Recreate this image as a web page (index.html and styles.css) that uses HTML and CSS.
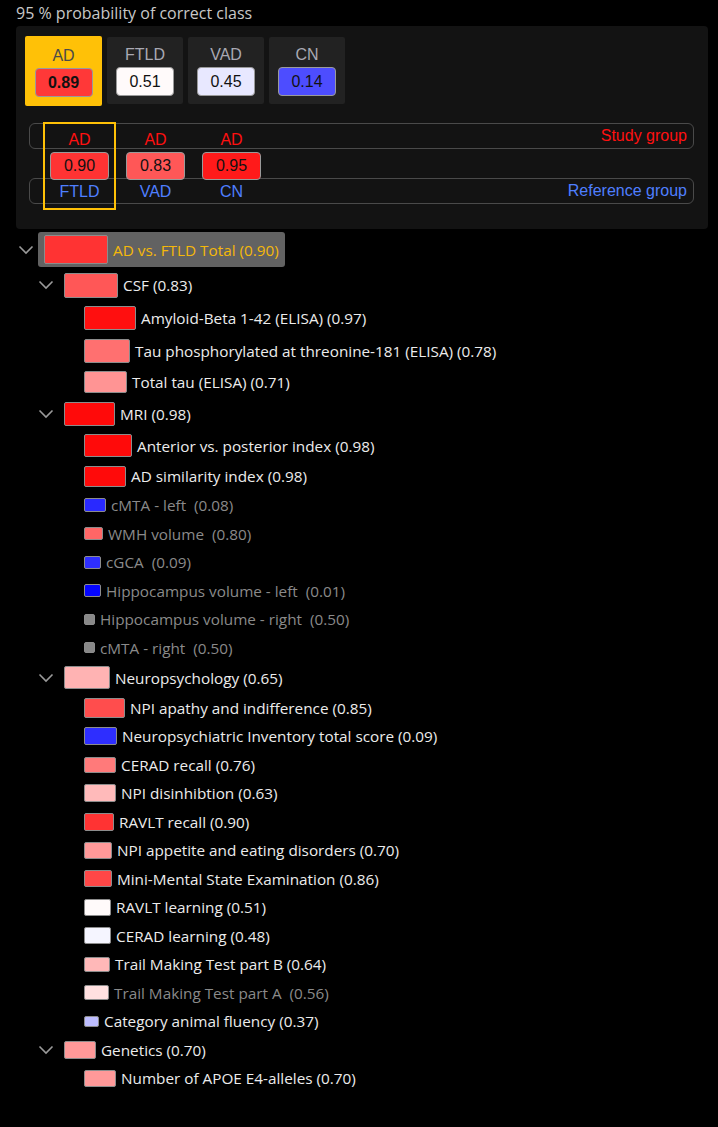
FILE: index.html
```html
<!DOCTYPE html>
<html lang="en">
<head>
    <meta charset="UTF-8">
    <meta name="viewport" content="width=device-width, initial-scale=1.0">
    <title>Classification</title>
    <link rel="stylesheet" href="styles.css">
</head>
<body>
    <div class="title">95 % probability of correct class</div>

    <div class="panel">
        <div class="classes">
            <div class="class-tab selected">
                <span class="class-name">AD</span>
                <span class="score" style="background:#ff3838">0.89</span>
            </div>
            <div class="class-tab">
                <span class="class-name">FTLD</span>
                <span class="score" style="background:#fffafa">0.51</span>
            </div>
            <div class="class-tab">
                <span class="class-name">VAD</span>
                <span class="score" style="background:#e8e8ff">0.45</span>
            </div>
            <div class="class-tab">
                <span class="class-name">CN</span>
                <span class="score" style="background:#4d4dff">0.14</span>
            </div>
        </div>

        <div class="compare">
            <div class="group-bars">
                <div class="group-bar study">Study group</div>
                <div class="group-bar reference">Reference group</div>
            </div>
            <div class="pairs">
                <div class="pair active">
                    <span class="pair-study">AD</span>
                    <span class="score" style="background:#ff3333">0.90</span>
                    <span class="pair-ref">FTLD</span>
                </div>
                <div class="pair">
                    <span class="pair-study">AD</span>
                    <span class="score" style="background:#ff5757">0.83</span>
                    <span class="pair-ref">VAD</span>
                </div>
                <div class="pair">
                    <span class="pair-study">AD</span>
                    <span class="score" style="background:#ff1a1a">0.95</span>
                    <span class="pair-ref">CN</span>
                </div>
            </div>
        </div>
    </div>

    <ul class="tree">
        <li>
            <div class="node root">
                <span class="toggle"><svg viewBox="0 0 16 16"><polyline points="1.5,4.5 8,11 14.5,4.5"/></svg></span>
                <span class="node-content selected">
                    <span class="swatch" style="width:64px;height:29px;background:#ff3333"></span>
                    <span class="node-label">AD vs. FTLD Total (0.90)</span>
                </span>
            </div>
            <ul>
                <li>
                    <div class="node">
                        <span class="toggle"><svg viewBox="0 0 16 16"><polyline points="1.5,4.5 8,11 14.5,4.5"/></svg></span>
                        <span class="node-content">
                            <span class="swatch" style="width:54px;height:25px;background:#ff5757"></span>
                            <span class="node-label">CSF (0.83)</span>
                        </span>
                    </div>
                    <ul>
                        <li><div class="node"><span class="toggle"></span><span class="node-content"><span class="swatch" style="width:52px;height:24px;background:#ff0f0f"></span><span class="node-label">Amyloid-Beta 1-42 (ELISA) (0.97)</span></span></div></li>
                        <li><div class="node"><span class="toggle"></span><span class="node-content"><span class="swatch" style="width:46px;height:24px;background:#ff7070"></span><span class="node-label">Tau phosphorylated at threonine-181 (ELISA) (0.78)</span></span></div></li>
                        <li><div class="node"><span class="toggle"></span><span class="node-content"><span class="swatch" style="width:43px;height:22px;background:#ff9494"></span><span class="node-label">Total tau (ELISA) (0.71)</span></span></div></li>
                    </ul>
                </li>
                <li>
                    <div class="node">
                        <span class="toggle"><svg viewBox="0 0 16 16"><polyline points="1.5,4.5 8,11 14.5,4.5"/></svg></span>
                        <span class="node-content">
                            <span class="swatch" style="width:51px;height:24px;background:#ff0a0a"></span>
                            <span class="node-label">MRI (0.98)</span>
                        </span>
                    </div>
                    <ul>
                        <li><div class="node"><span class="toggle"></span><span class="node-content"><span class="swatch" style="width:48px;height:23px;background:#ff0a0a"></span><span class="node-label">Anterior vs. posterior index (0.98)</span></span></div></li>
                        <li><div class="node"><span class="toggle"></span><span class="node-content"><span class="swatch" style="width:42px;height:21px;background:#ff0a0a"></span><span class="node-label">AD similarity index (0.98)</span></span></div></li>
                        <li><div class="node missing"><span class="toggle"></span><span class="node-content"><span class="swatch" style="width:22px;height:14px;background:#2929ff"></span><span class="node-label">cMTA - left&nbsp; (0.08)</span></span></div></li>
                        <li><div class="node missing"><span class="toggle"></span><span class="node-content"><span class="swatch" style="width:19px;height:13px;background:#ff6666"></span><span class="node-label">WMH volume&nbsp; (0.80)</span></span></div></li>
                        <li><div class="node missing"><span class="toggle"></span><span class="node-content"><span class="swatch" style="width:17px;height:13px;background:#2e2eff"></span><span class="node-label">cGCA&nbsp; (0.09)</span></span></div></li>
                        <li><div class="node missing"><span class="toggle"></span><span class="node-content"><span class="swatch" style="width:17px;height:13px;background:#0505ff"></span><span class="node-label">Hippocampus volume - left&nbsp; (0.01)</span></span></div></li>
                        <li><div class="node missing"><span class="toggle"></span><span class="node-content"><span class="swatch" style="width:11px;height:11px;background:#888888"></span><span class="node-label">Hippocampus volume - right&nbsp; (0.50)</span></span></div></li>
                        <li><div class="node missing"><span class="toggle"></span><span class="node-content"><span class="swatch" style="width:11px;height:11px;background:#888888"></span><span class="node-label">cMTA - right&nbsp; (0.50)</span></span></div></li>
                    </ul>
                </li>
                <li>
                    <div class="node">
                        <span class="toggle"><svg viewBox="0 0 16 16"><polyline points="1.5,4.5 8,11 14.5,4.5"/></svg></span>
                        <span class="node-content">
                            <span class="swatch" style="width:46px;height:23px;background:#ffb3b3"></span>
                            <span class="node-label">Neuropsychology (0.65)</span>
                        </span>
                    </div>
                    <ul>
                        <li><div class="node"><span class="toggle"></span><span class="node-content"><span class="swatch" style="width:41px;height:20px;background:#ff4d4d"></span><span class="node-label">NPI apathy and indifference (0.85)</span></span></div></li>
                        <li><div class="node"><span class="toggle"></span><span class="node-content"><span class="swatch" style="width:33px;height:18px;background:#2e2eff"></span><span class="node-label">Neuropsychiatric Inventory total score (0.09)</span></span></div></li>
                        <li><div class="node"><span class="toggle"></span><span class="node-content"><span class="swatch" style="width:32px;height:16px;background:#ff7a7a"></span><span class="node-label">CERAD recall (0.76)</span></span></div></li>
                        <li><div class="node"><span class="toggle"></span><span class="node-content"><span class="swatch" style="width:32px;height:18px;background:#ffbaba"></span><span class="node-label">NPI disinhibtion (0.63)</span></span></div></li>
                        <li><div class="node"><span class="toggle"></span><span class="node-content"><span class="swatch" style="width:30px;height:18px;background:#ff3333"></span><span class="node-label">RAVLT recall (0.90)</span></span></div></li>
                        <li><div class="node"><span class="toggle"></span><span class="node-content"><span class="swatch" style="width:28px;height:17px;background:#ff9999"></span><span class="node-label">NPI appetite and eating disorders (0.70)</span></span></div></li>
                        <li><div class="node"><span class="toggle"></span><span class="node-content"><span class="swatch" style="width:28px;height:17px;background:#ff4747"></span><span class="node-label">Mini-Mental State Examination (0.86)</span></span></div></li>
                        <li><div class="node"><span class="toggle"></span><span class="node-content"><span class="swatch" style="width:27px;height:17px;background:#fffafa"></span><span class="node-label">RAVLT learning (0.51)</span></span></div></li>
                        <li><div class="node"><span class="toggle"></span><span class="node-content"><span class="swatch" style="width:27px;height:17px;background:#f5f5ff"></span><span class="node-label">CERAD learning (0.48)</span></span></div></li>
                        <li><div class="node"><span class="toggle"></span><span class="node-content"><span class="swatch" style="width:26px;height:15px;background:#ffb8b8"></span><span class="node-label">Trail Making Test part B (0.64)</span></span></div></li>
                        <li><div class="node missing"><span class="toggle"></span><span class="node-content"><span class="swatch" style="width:25px;height:15px;background:#ffe0e0"></span><span class="node-label">Trail Making Test part A&nbsp; (0.56)</span></span></div></li>
                        <li><div class="node"><span class="toggle"></span><span class="node-content"><span class="swatch" style="width:15px;height:11px;background:#bdbdff"></span><span class="node-label">Category animal fluency (0.37)</span></span></div></li>
                    </ul>
                </li>
                <li>
                    <div class="node">
                        <span class="toggle"><svg viewBox="0 0 16 16"><polyline points="1.5,4.5 8,11 14.5,4.5"/></svg></span>
                        <span class="node-content">
                            <span class="swatch" style="width:32px;height:18px;background:#ff9999"></span>
                            <span class="node-label">Genetics (0.70)</span>
                        </span>
                    </div>
                    <ul>
                        <li><div class="node"><span class="toggle"></span><span class="node-content"><span class="swatch" style="width:32px;height:17px;background:#ff9999"></span><span class="node-label">Number of APOE E4-alleles (0.70)</span></span></div></li>
                    </ul>
                </li>
            </ul>
        </li>
    </ul>
</body>
</html>
```

FILE: styles.css
```css
:root {
    --bg: #000;
    --panel: #131313;
    --tab: #222;
    --amber: #ffc107;
    --study: #ff1010;
    --reference: #4f7fff;
    --text: #ececec;
    --muted: #8a8a8a;
}

* {
    margin: 0;
    padding: 0;
    box-sizing: border-box;
}

body {
    background: var(--bg);
    color: var(--text);
    font-family: 'Open Sans', 'Noto Sans', sans-serif;
    font-size: 15.3px;
    font-weight: 500;
}

.title {
    height: 26px;
    padding-left: 16px;
    line-height: 26px;
    font-size: 16px;
    font-weight: 400;
    color: #c8c8c8;
}

.panel {
    margin: 0 10px 0 16px;
    padding: 10px 14px 19px 9px;
    background: var(--panel);
    border-radius: 4px;
    font-family: 'Liberation Sans', Arial, sans-serif;
    font-size: 16px;
    font-weight: 400;
}

/* class tabs */
.classes {
    display: flex;
    align-items: flex-start;
    gap: 4px;
}

.class-tab {
    width: 76px;
    height: 67px;
    margin-top: 1px;
    display: flex;
    flex-direction: column;
    align-items: center;
    justify-content: center;
    gap: 2px;
    background: var(--tab);
    border-radius: 2px;
}

.class-tab + .class-tab {
    margin-left: 1px;
}

.class-tab.selected {
    width: 77px;
    height: 70px;
    margin-top: 0;
    background: var(--amber);
}

.class-name {
    line-height: 20px;
    color: #a9a9b3;
}

.selected .class-name {
    color: #4a4a4a;
}

.score {
    width: 58px;
    height: 29px;
    line-height: 27px;
    text-align: center;
    color: #111;
    border: 1px solid #9a9a9a;
    border-radius: 4px;
}

.selected .score {
    font-weight: bold;
}

/* study vs reference comparison */
.compare {
    display: grid;
    margin: 16px 0 0 4px;
}

.group-bars,
.pairs {
    grid-area: 1 / 1;
}

.group-bars {
    display: flex;
    flex-direction: column;
    gap: 29px;
    padding-top: 1px;
}

.group-bar {
    height: 26px;
    padding-right: 6px;
    line-height: 24px;
    text-align: right;
    border: 1px solid #4a4a4a;
    border-radius: 6px;
}

.study {
    color: var(--study);
}

.reference {
    color: var(--reference);
}

.pairs {
    display: flex;
    gap: 3px;
    padding-left: 14px;
}

.pair {
    width: 73px;
    padding: 6px 0;
    display: flex;
    flex-direction: column;
    align-items: center;
    gap: 2px;
    border: 2px solid transparent;
}

.pair.active {
    border-color: var(--amber);
}

.pair .score {
    width: 59px;
    height: 28px;
    line-height: 26px;
}

.pair-study,
.pair-ref {
    line-height: 20px;
}

.pair-study {
    color: var(--study);
}

.pair-ref {
    color: var(--reference);
}

/* feature tree */
.tree {
    margin-top: 2px;
    padding-left: 18px;
    list-style: none;
}

.tree ul {
    padding-left: 20px;
    list-style: none;
}

.node {
    display: flex;
    align-items: center;
    margin-bottom: 0.5px;
}

.node.root {
    padding: 1px 0;
}

.toggle {
    width: 20px;
    flex: none;
    display: flex;
}

.toggle svg {
    width: 16px;
    height: 16px;
    fill: none;
    stroke: #9a9a9a;
    stroke-width: 1.6;
}

.node-content {
    display: inline-flex;
    align-items: center;
    gap: 5px;
    padding: 4px 6px;
    border-radius: 3px;
}

.node-content.selected {
    padding: 3px 6px;
    background: #626262;
}

.selected .node-label {
    color: #f5b80a;
}

.swatch {
    flex: none;
    border: 1px solid #8c8c8c;
    border-radius: 2px;
}

.node-label {
    line-height: 20px;
    white-space: nowrap;
}

.missing .node-label {
    color: var(--muted);
}
```
